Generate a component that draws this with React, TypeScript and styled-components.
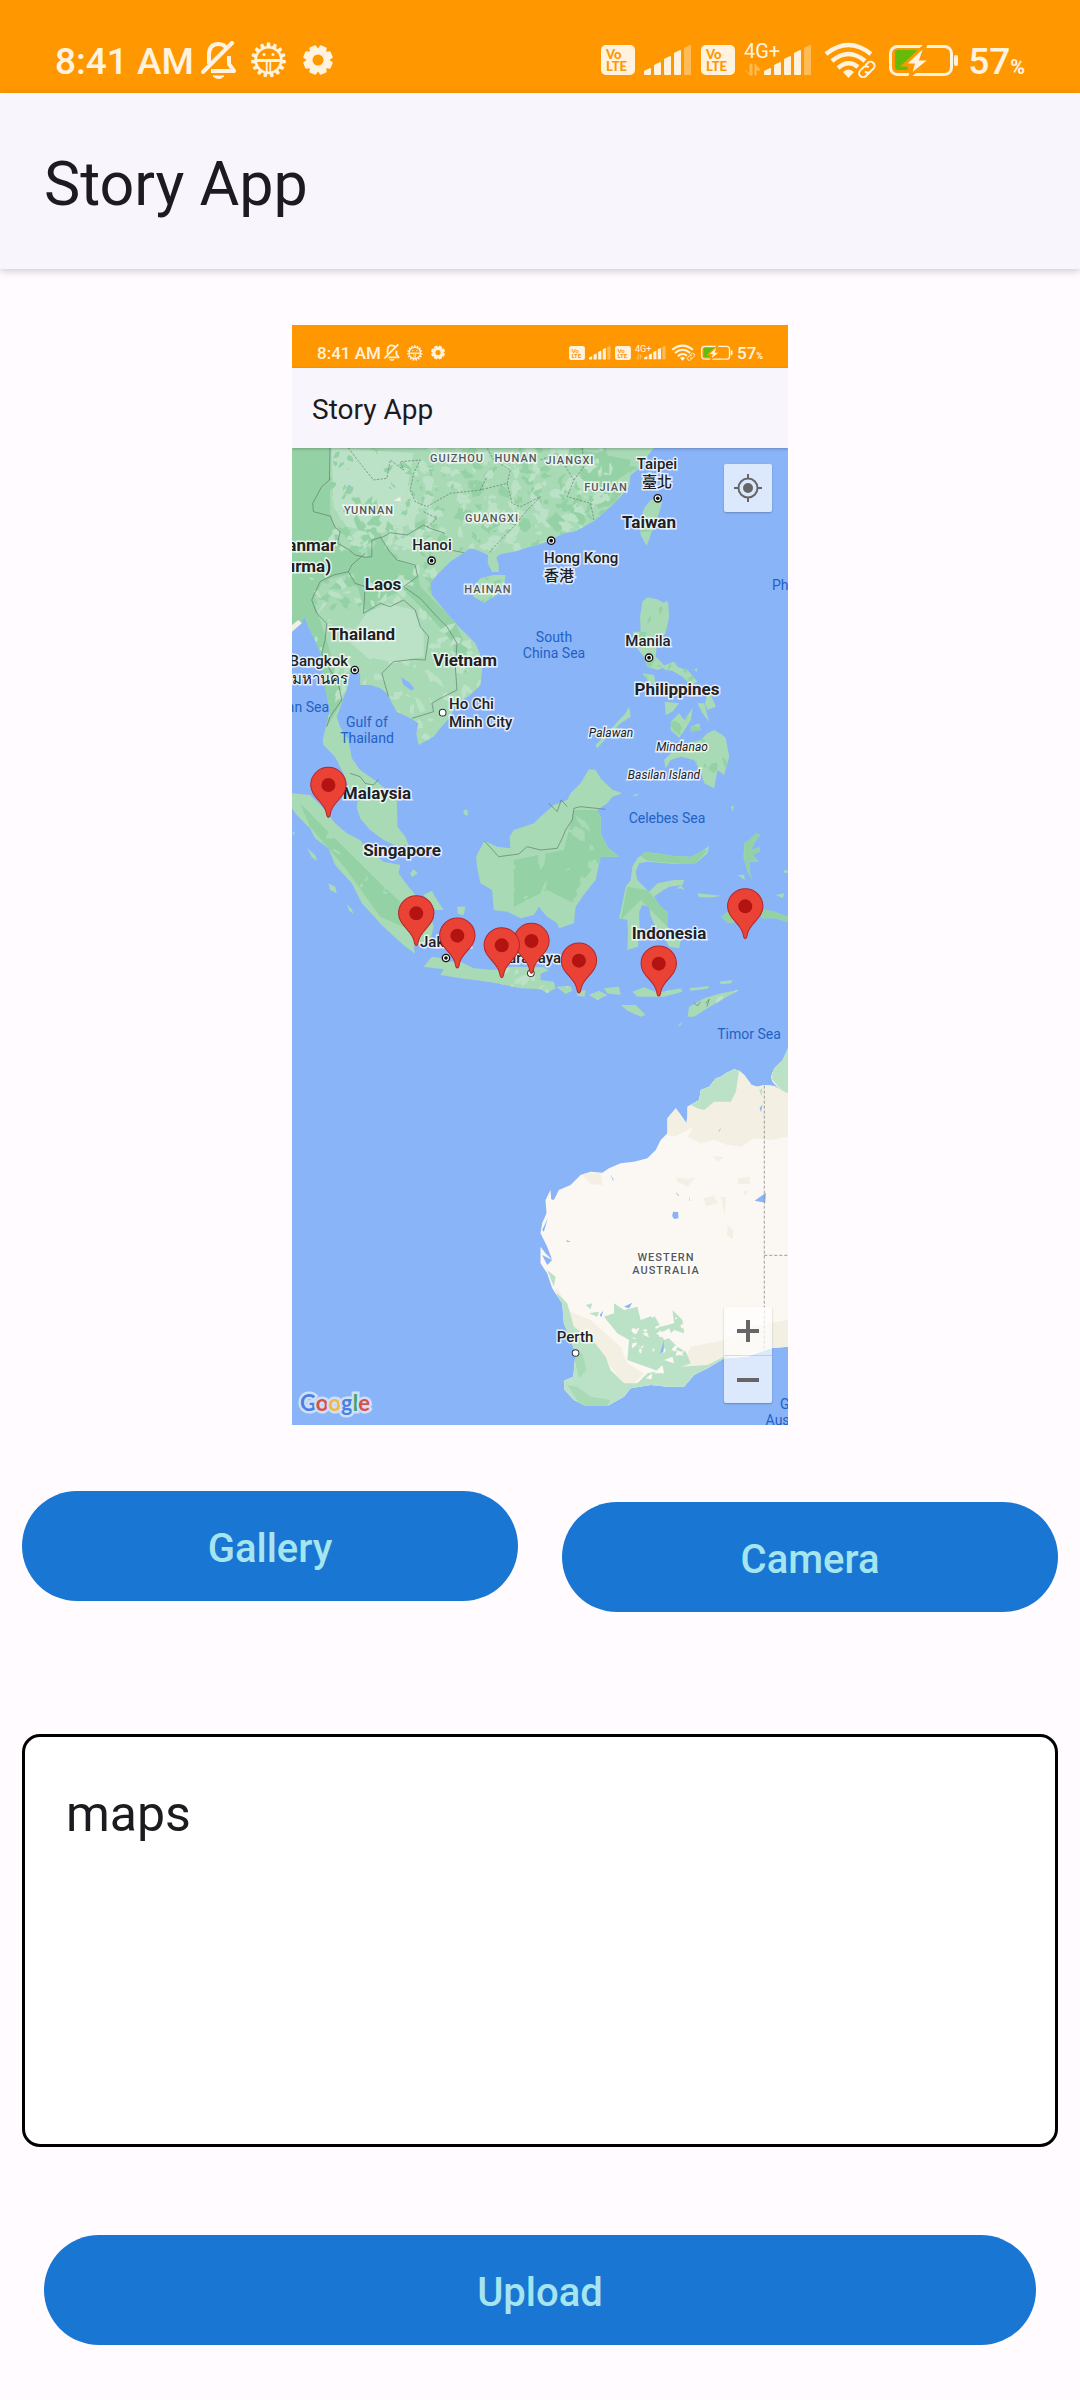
import React from 'react';
import styled, { createGlobalStyle, css } from 'styled-components';

const GlobalStyle = createGlobalStyle`
  * { box-sizing: border-box; }
  body {
    margin: 0;
    background: #fffbff;
    font-family: Roboto, "Noto Sans CJK TC", "Noto Sans", sans-serif;
  }
`;

const CREAM = '#fff3e0';
const ORANGE = '#ff9800';

/* ---------- status bar ---------- */

const Bar = styled.div<{ $compact: boolean }>`
  display: flex;
  align-items: center;
  justify-content: space-between;
  background: ${ORANGE};
  color: ${CREAM};
  height: ${p => (p.$compact ? '43px' : '93px')};
  padding: ${p => (p.$compact ? '12px 25px 0' : '27px 55px 0')};
`;

const Cluster = styled.div<{ $gap: number }>`
  display: flex;
  align-items: center;
  gap: ${p => p.$gap}px;
`;

const Slot = styled.span<{ $compact: boolean }>`
  display: flex;
  justify-content: center;
  width: ${p => (p.$compact ? 23 : 50)}px;
`;

const StatusText = styled.span<{ $compact: boolean }>`
  font-size: ${p => (p.$compact ? 17 : 37)}px;
  line-height: 1;
  font-weight: 500;
  white-space: nowrap;
  padding-top: ${p => (p.$compact ? 1 : 3)}px;
`;

const Percent = styled.small<{ $compact: boolean }>`
  font-size: ${p => (p.$compact ? 9 : 20)}px;
  font-weight: 700;
`;

type IconProps = { w: number; h: number };

function gearPoints(cx: number, cy: number, teeth: number, outer: number, inner: number, duty: number) {
  const pts: string[] = [];
  for (let i = 0; i < teeth; i++) {
    const mid = (i / teeth) * Math.PI * 2 - Math.PI / 2;
    const step = (Math.PI * 2) / teeth;
    [[-duty, inner], [-duty * 0.6, outer], [duty * 0.6, outer], [duty, inner]].forEach(([a, r]) => {
      pts.push(`${(cx + Math.cos(mid + a * step) * r).toFixed(2)},${(cy + Math.sin(mid + a * step) * r).toFixed(2)}`);
    });
  }
  return pts.join(' ');
}

const BellOff = ({ w, h }: IconProps) => (
  <svg width={w} height={h} viewBox="0 0 36 38" fill="none" stroke={CREAM} strokeWidth="4" strokeLinejoin="round">
    <path d="M8 23V14C8 6 12 3 17.500 3S25 6 26 8M28 15v8l5 7H10" />
    <path d="M2 31L31 2" strokeLinecap="round" />
    <path d="M12 35h11q-5 5-11 0z" fill={CREAM} strokeWidth="1" />
  </svg>
);

const BugGear = ({ w, h }: IconProps) => (
  <svg width={w} height={h} viewBox="0 0 36 36">
    <polygon points={gearPoints(17.5, 18, 15, 17.5, 14, 0.35)} fill={CREAM} />
    <circle cx="17.500" cy="18" r="11.500" fill={ORANGE} />
    <path d="M6 18.500h23" stroke={CREAM} strokeWidth="3" />
    <path d="M15.700 19v11M19.300 19v11" stroke={CREAM} strokeWidth="1.800" />
    <circle cx="13" cy="12.500" r="1.500" fill={CREAM} />
    <circle cx="22" cy="12.500" r="1.500" fill={CREAM} />
  </svg>
);

const Gear = ({ w, h }: IconProps) => (
  <svg width={w} height={h} viewBox="0 0 32 32">
    <polygon
      points={gearPoints(15, 16, 8, 13.5, 10.5, 0.36)}
      fill={CREAM}
      stroke={CREAM}
      strokeWidth="3"
      strokeLinejoin="round"
      transform="rotate(22.5 15 16)"
    />
    <circle cx="15" cy="16" r="5.500" fill={ORANGE} />
  </svg>
);

const Volte = ({ w, h }: IconProps) => (
  <svg width={w} height={h} viewBox="0 0 34 30" fontFamily="Lato, sans-serif" fontWeight="900" fill={ORANGE}>
    <rect width="34" height="30" rx="5" fill={CREAM} />
    <text x="5" y="14" fontSize="13">Vo</text>
    <text x="5" y="26" fontSize="13">LTE</text>
  </svg>
);

const bars = (x: number) =>
  [
    [24, 7],
    [18, 13],
    [12, 19],
    [6, 25],
    [1, 30],
  ].map(([y, h], i) => (
    <path
      key={i}
      d={`M${x + i * 10} ${y + 3}l6-3q1 0 1 1v${h - 2}q0 1-1 1h-5q-1 0-1-1z`}
      fill={i === 4 ? '#ffbb55' : CREAM}
    />
  ));

const Signal = ({ w, h }: IconProps) => (
  <svg width={w} height={h} viewBox="0 0 48 32">{bars(0)}</svg>
);

const SignalData = ({ w, h }: IconProps) => (
  <svg width={w} height={h} viewBox="0 0 68 36" overflow="visible">
    <text x="0" y="16" fontSize="20" fill={CREAM}>4G+</text>
    <path d="M1 28l5 5V22h2v11H6zM11 33V22l5 6h-4v5z" fill="#ffbb55" stroke="#ffbb55" />
    <g transform="translate(0 2)">{bars(20)}</g>
  </svg>
);

const Wifi = ({ w, h }: IconProps) => (
  <svg width={w} height={h} viewBox="0 0 59 36" fill="none" stroke={CREAM}>
    <path d="M5 12Q27.500-6 50 12M11 19Q27.500 5 44 19M17 26Q27.500 17 37 25" strokeWidth="4.500" />
    <path d="M22 30q5.500-5 11 0l-5.500 6z" fill={CREAM} stroke="none" />
    <g strokeWidth="2" strokeLinecap="round" transform="rotate(-45 46 28)">
      <path d="M46 31.500h-5a4 4 0 0 1 0-8h4.500a4 4 0 0 1 3.500 3" />
      <path d="M46 23.500h5a4 4 0 0 1 0 8h-2" opacity="0" />
      <path d="M49 23.500h2.500a4 4 0 0 1 0 8H47a4 4 0 0 1-3.500-3" />
    </g>
  </svg>
);

const Battery = ({ w, h }: IconProps) => (
  <svg width={w} height={h} viewBox="0 0 70 32">
    <rect x="1.500" y="2.500" width="61" height="28" rx="7" fill="none" stroke={CREAM} strokeWidth="3" />
    <path d="M6 9q0-3 3-3h20L17 18l2 8H9q-3 0-3-3z" fill="#66bb0a" />
    <path d="M37 0L15 21h9l-3 11 21-17H32z" fill={CREAM} stroke={ORANGE} strokeWidth="3" />
    <rect x="65" y="11" width="4" height="11" rx="2" fill={CREAM} />
  </svg>
);

function StatusBar({ compact = false }: { compact?: boolean }) {
  const s = compact
    ? { bell: [16, 17], bug: [16, 16], gear: [15, 15], volte: [16, 14], sig: [22, 15], data: [31, 17], wifi: [27, 17], bat: [32, 15] }
    : { bell: [36, 38], bug: [36, 36], gear: [32, 32], volte: [34, 30], sig: [48, 32], data: [68, 36], wifi: [59, 36], bat: [70, 32] };
  return (
    <Bar $compact={compact}>
      <Cluster $gap={0}>
        <StatusText $compact={compact}>8:41 AM</StatusText>
        <Slot $compact={compact}><BellOff w={s.bell[0]} h={s.bell[1]} /></Slot>
        <Slot $compact={compact}><BugGear w={s.bug[0]} h={s.bug[1]} /></Slot>
        <Slot $compact={compact}><Gear w={s.gear[0]} h={s.gear[1]} /></Slot>
      </Cluster>
      <Cluster $gap={compact ? 4 : 9}>
        <Volte w={s.volte[0]} h={s.volte[1]} />
        <Signal w={s.sig[0]} h={s.sig[1]} />
        <Volte w={s.volte[0]} h={s.volte[1]} />
        <SignalData w={s.data[0]} h={s.data[1]} />
        <Wifi w={s.wifi[0]} h={s.wifi[1]} />
        <Battery w={s.bat[0]} h={s.bat[1]} />
        <StatusText $compact={compact}>
          57<Percent $compact={compact}>%</Percent>
        </StatusText>
      </Cluster>
    </Bar>
  );
}

/* ---------- app bar ---------- */

const AppBar = styled.header<{ $compact?: boolean }>`
  position: relative;
  z-index: 1;
  display: flex;
  align-items: center;
  background: #f8f5fc;
  color: #1c1b1f;
  font-weight: 400;
  line-height: 1;
  ${p =>
    p.$compact
      ? css`
          height: 80px;
          padding: 4px 20px 0;
          font-size: 28px;
          box-shadow: 0 1px 3px rgba(0, 0, 0, 0.25);
        `
      : css`
          height: 176px;
          padding: 7px 44px 0;
          font-size: 61px;
          box-shadow: 0 2px 8px rgba(0, 0, 0, 0.2);
        `}
`;

const Title = styled.h1`
  margin: 0;
  font: inherit;
`;

/* ---------- map drawing ---------- */
/* Map units: three to a pixel, the visible window starts at 36,24. */

const MAINLAND =
  'M36 24H1120L1090 60 1070 90 1050 105 1045 140 1020 170 995 195 945 240 910 260 880 275 850 280 810 300 780 312 745 322 700 335 660 343 648 352 655 375 655 396 635 396 622 370 623 345 590 330 570 325 540 345 510 365 490 385 470 405 450 430 455 465 475 490 500 520 530 555 560 585 585 610 600 645 605 690 600 735 570 765 530 790 510 830 480 865 460 890 415 915 408 880 415 850 390 835 350 815 335 790 320 760 300 745 270 735 240 735 240 700 205 700 205 735 195 760 185 790 170 830 180 860 205 900 215 955 240 990 290 1025 320 1050 350 1080 352 1160 375 1190 385 1215 350 1218 310 1200 270 1170 240 1135 230 1100 235 1070 205 1040 190 1000 165 950 130 915 128 900 135 870 150 810 130 720 125 650 105 600 85 560 72 528 65 550 36 575Z';

const ISLANDS = [
  'M1130 170L1145 185 1135 220 1115 270 1098 318 1080 285 1077 250 1090 205 1110 180Z',
  'M575 445L600 415 640 405 675 405 672 430 650 465 610 488 580 470Z',
  'M1085 485L1100 472 1130 478 1148 488 1162 482 1165 530 1155 580 1130 600 1125 650 1155 680 1130 690 1100 680 1090 650 1065 620 1070 595 1055 575 1080 575 1078 530Z',
  'M1140 680L1180 665 1192 682 1220 690 1250 725 1230 735 1205 710 1175 692 1155 690Z',
  'M1085 700L1120 705 1125 735 1105 730Z',
  'M1280 765L1290 765 1305 800 1280 810 1272 790Z',
  'M1152 785L1195 790 1175 815 1155 825Z',
  'M1170 845L1195 820 1210 840 1235 805 1230 840 1205 880 1195 893 1170 870Z',
  'M1250 790L1270 790 1285 845 1265 820Z',
  'M1230 860L1255 850 1260 870 1230 875Z',
  'M1240 690L1250 683 1248 695Z',
  'M1300 870L1325 885 1335 895 1345 950 1330 1005 1310 990 1300 1045 1270 1030 1260 995 1240 960 1200 950 1170 960 1155 985 1150 960 1180 930 1220 910 1260 900 1280 880Z',
  'M1045 800L1050 830 1020 850 990 880 950 925 945 915 980 880 1015 840 1035 820Z',
  'M780 1130L760 1150 700 1170 688 1190 690 1225 650 1220 612 1203 600 1225 587 1250 590 1280 600 1330 635 1350 640 1410 680 1415 720 1435 760 1425 775 1400 800 1430 830 1450 835 1465 880 1450 885 1400 905 1370 945 1320 960 1250 1015 1250 980 1220 960 1180 960 1130 950 1110 980 1090 995 1070 1025 1060 995 1050 960 1015 945 990 925 988 900 1030 870 1060 860 1080 820 1095Z',
  'M36 1060L90 1065 130 1105 165 1150 200 1180 240 1200 260 1225 310 1265 360 1275 355 1300 385 1340 410 1370 450 1420 460 1460 450 1500 400 1520 405 1542 370 1515 310 1460 245 1390 215 1330 165 1275 145 1225 105 1195 90 1165 50 1125 36 1105Z',
  'M430 1365L455 1352 470 1380 490 1410 465 1410Z',
  'M530 1400L555 1400 550 1425 533 1422Z',
  'M82 1225L105 1245 112 1262 95 1252Z',
  'M145 1330L165 1340 170 1360 150 1350Z',
  'M200 1393L215 1408 220 1422 208 1412Z',
  'M36 1173L46 1180 40 1184ZM390 1300L400 1288 412 1300 395 1312ZM548 1112L560 1108 564 1126 554 1126Z',
  'M430 1580L455 1550 490 1555 500 1565 540 1565 580 1585 640 1590 700 1580 790 1582 805 1590 780 1602 780 1620 820 1625 825 1645 800 1660 780 1648 720 1645 650 1630 600 1622 540 1615 480 1605 490 1588Z',
  'M828 1640L870 1638 875 1652 855 1662ZM888 1655L915 1650 912 1670 890 1668Z',
  'M925 1665L955 1652 980 1665 950 1680ZM970 1645L1015 1640 1020 1665 980 1660Z',
  'M1055 1655L1090 1642 1130 1658 1200 1645 1205 1655 1150 1670 1070 1670Z',
  'M1020 1695L1065 1695 1095 1725 1080 1730 1040 1712ZM1225 1645L1285 1638 1280 1646 1230 1652Z',
  'M1220 1730L1225 1700 1270 1675 1320 1660 1375 1650 1330 1675 1280 1705 1240 1730ZM1190 1757L1205 1745 1200 1756Z',
  'M1315 1625L1355 1620 1350 1630 1320 1633Z',
  'M1285 1218L1280 1240 1245 1270 1180 1272 1100 1265 1075 1270 1065 1295 1070 1320 1090 1340 1105 1355 1130 1330 1180 1320 1210 1320 1205 1335 1165 1340 1140 1355 1120 1370 1140 1400 1160 1415 1160 1460 1180 1480 1200 1500 1195 1525 1165 1520 1150 1490 1125 1460 1110 1430 1105 1400 1085 1395 1075 1415 1077 1460 1072 1520 1040 1530 1042 1480 1040 1440 1015 1435 1025 1390 1035 1340 1050 1320 1055 1280 1070 1255 1095 1235 1180 1248 1230 1250 1260 1235Z',
  'M1425 1180L1437 1185 1420 1210 1410 1230 1437 1222 1435 1235 1415 1245 1435 1265 1405 1265 1408 1300 1415 1320 1400 1295 1388 1250 1390 1210 1405 1200Z',
  'M1250 1360L1320 1367 1300 1372 1255 1372ZM1320 1430L1345 1412 1400 1425 1380 1445 1340 1448ZM1445 1408L1480 1415 1521 1430 1521 1445 1480 1435 1440 1435Z',
  'M1485 1365L1510 1360 1505 1375ZM1370 1305L1390 1305 1392 1320ZM1508 1290L1521 1292V1298H1510ZM1350 1100L1358 1096 1356 1115ZM1185 1348L1200 1336 1212 1350 1198 1345ZM1055 1066L1075 1060 1068 1068Z',
];

const ASIA = MAINLAND + ISLANDS.join('');

const AUSTRALIA =
  'M1521 1825L1505 1860 1480 1885 1470 1910 1475 1925 1497 1950 1480 1938 1450 1935 1430 1940 1412 1935 1390 1905 1375 1892 1360 1888 1335 1900 1320 1910 1305 1915 1285 1940 1260 1950 1255 1980 1220 2000 1220 2025 1217 2050 1200 2025 1185 2005 1160 2035 1160 2080 1140 2100 1125 2130 1100 2155 1060 2165 1020 2170 985 2185 965 2198 930 2195 900 2205 870 2235 835 2250 820 2280 812 2278 810 2250 795 2280 798 2320 785 2350 780 2380 800 2420 815 2460 795 2440 780 2420 780 2470 800 2500 815 2545 845 2590 850 2650 870 2700 885 2740 878 2810 850 2822 852 2850 880 2880 915 2898 980 2898 1030 2870 1050 2845 1110 2835 1160 2840 1210 2840 1240 2805 1280 2785 1330 2755 1400 2750 1470 2725 1521 2720Z';

const BORDERS = [
  'M150 24L148 120 125 140 98 190 100 215 150 228 165 262 180 275 172 310 205 328 225 345 255 352 275 350 275 300 310 290 330 278 380 285 430 255 450 265 495 280M495 332L520 332 550 338',
  'M255 340L215 375 205 395 160 405 120 425 95 480 110 520 140 550 135 600 125 640 150 690 175 730 185 780 150 830 140 860',
  'M205 395L225 430 255 440 250 520 300 490 330 500 370 480 405 510 420 560 445 590 435 660 400 658 340 665 305 700 325 770',
  'M300 290L325 330 350 360 405 375 412 410 370 440 420 475 470 530 500 560 530 610 525 680 530 750 480 775 455 790 460 815 395 835',
  'M210 1000L240 1010 255 1030 280 1035 295 1018',
  'M612 1203L655 1250 715 1242 740 1220 780 1230 830 1225 845 1195 855 1170 875 1140 880 1105 900 1100 975 1108M805 1090L830 1115 842 1080 860 1100',
  'M1240 1688L1250 1698 1258 1686M1275 1690L1285 1678 1278 1700',
];

const PROVINCES = [
  'M205 24L240 70 280 120 320 115 330 60 370 90 360 65 420 60 400 100 390 150 405 185 440 200 510 160 600 150 680 130 695 190 720 200 780 170',
  'M430 215L470 235 440 262M780 170L740 210 700 260 660 300 625 340M680 130L690 90 640 60 620 24M780 60L830 40 880 120 860 170 930 190 940 240M880 120L910 80 905 24M600 150L620 110',
];

/* Repeatable scatter of irregular, slanted patches, used for the relief shading. */
function patches(seed: number, count: number, x0: number, y0: number, x1: number, y1: number, size: number) {
  let s = seed;
  const rnd = () => {
    s = (s * 16807) % 2147483647;
    return s / 2147483647;
  };
  let d = '';
  for (let i = 0; i < count; i++) {
    const cx = x0 + rnd() * (x1 - x0);
    const cy = y0 + rnd() * (y1 - y0);
    const r = size * (0.3 + rnd());
    const flat = 0.3 + rnd() * 0.5;
    const tilt = rnd() * Math.PI;
    const n = 7 + Math.floor(rnd() * 5);
    for (let k = 0; k < n; k++) {
      const a = (k / n) * Math.PI * 2;
      const q = r * (0.4 + rnd() * 0.9);
      const u = Math.cos(a) * q;
      const v = Math.sin(a) * q * flat;
      const px = cx + u * Math.cos(tilt) - v * Math.sin(tilt);
      const py = cy + u * Math.sin(tilt) + v * Math.cos(tilt);
      d += `${k ? 'L' : 'M'}${Math.round(px)} ${Math.round(py)}`;
    }
    d += 'Z';
  }
  return d;
}

const CAPITALS = [[454, 362], [224, 690], [1131, 175], [812, 302], [1105, 653], [497, 1554]];
const CITIES = [[487, 818], [751, 1600], [885, 2739]];
const PINS = [[145, 1132], [408, 1517], [531, 1584], [753, 1600], [664, 1613], [895, 1659], [1134, 1668], [1393, 1496]];

const MapLayer = styled.svg`
  position: absolute;
  inset: 0;
  width: 100%;
  height: 100%;
  pointer-events: none;
`;

const Terrain = () => (
  <MapLayer viewBox="36 24 1485 2931" preserveAspectRatio="none" aria-hidden="true">
    <defs>
      <clipPath id="asia"><path d={ASIA} /></clipPath>
      <clipPath id="australia"><path d={AUSTRALIA} /></clipPath>
    </defs>
    <path d={ASIA} fill="#a8dab5" />
    <g clipPath="url(#asia)">
      <path d="M36 24H150V220L190 330 260 350 300 290 350 360 410 380 420 440 520 540 560 620 560 700 520 680 520 610 440 520 370 450 300 480 250 500 220 400 130 420 100 480 140 600 190 780 140 860 36 600Z" fill="#94d2a5" />
      <path d="M155 24L400 40 380 150 420 190 400 250 300 280 200 260 160 200Z" fill="#bbe2c6" />
      <path d="M260 520L320 490 400 510 430 580 430 650 330 665 260 650 200 600Z" fill="#bbe2c6" />
      <path d="M900 30L1050 60 1040 100 960 150 900 130Z" fill="#94d2a5" />
      <path d="M700 1260L850 1230 880 1110 960 1110 1015 1250 960 1260 900 1330 880 1390 800 1350 700 1400Z" fill="#94d2a5" />
      <path d="M60 1090L160 1190 300 1330 430 1450 440 1490 300 1430 200 1290 90 1160Z" fill="#94d2a5" />
      <path d="M1040 1340L1100 1350 1160 1420 1160 1460 1080 1380 1020 1440ZM1060 1235L1280 1230 1240 1275 1100 1262Z" fill="#94d2a5" />
      <path d="M1320 1410H1521V1450H1320ZM1390 1180H1440V1320H1390Z" fill="#94d2a5" />
      <path d={patches(77, 260, 36, 24, 1060, 500, 24)} fill="#94d2a5" />
      <path d={patches(311, 200, 150, 24, 1000, 330, 20)} fill="#bbe2c6" />
      <path d={patches(53, 110, 60, 360, 600, 900, 20)} fill="#bbe2c6" />
      <path d={patches(919, 110, 1040, 160, 1360, 1050, 18)} fill="#94d2a5" />
      <path d={patches(401, 110, 36, 950, 520, 1540, 18)} fill="#a8dab5" />
      <path d={patches(647, 60, 590, 990, 1010, 1460, 26)} fill="#a8dab5" />
      <path d={patches(128, 60, 430, 1550, 1380, 1740, 18)} fill="#bbe2c6" />
      <path d="M36 555L55 540 66 550 36 580ZM340 182L360 170 362 184Z" fill="#f3efe3" />
      <path d="M362 712L385 725 402 745 395 752 370 735ZM205 132L213 140 208 142ZM465 1020L470 1030Z" fill="#8ab4f8" />
    </g>
    <path d={AUSTRALIA} fill="#fbf8f3" />
    <g clipPath="url(#australia)">
      <path d="M1150 2000L1250 1900 1400 1880 1521 1900V2090L1470 2100 1420 2095 1380 2120 1340 2115 1300 2100 1260 2110 1220 2090 1240 2060 1180 2090 1150 2080Z" fill="#f3efe3" />
      <path d="M900 2200L960 2200 965 2235 930 2232ZM1185 2212L1220 2218 1245 2212 1220 2240 1190 2225ZM1268 2275L1300 2268 1310 2290 1275 2298ZM1320 2270L1335 2270 1332 2325ZM1340 2355L1358 2370 1355 2398 1338 2385ZM1370 2215L1405 2210 1408 2232 1372 2232ZM1385 2255L1402 2250 1395 2270ZM1295 2148L1330 2152 1310 2165Z" fill="#f3efe3" />
      <path d="M870 2615L930 2640 1020 2720 1040 2770 1090 2800 1040 2850 950 2720 880 2660 815 2560 830 2545ZM1210 2760L1230 2720 1330 2700 1400 2660 1521 2640V2740L1400 2740 1280 2790 1210 2780Z" fill="#f3efe3" />
      <path d="M1180 2000L1220 1990 1250 2005 1270 2010 1300 1985 1350 1985 1365 1955 1375 1890 1350 1870 1250 1900ZM1521 1810V1960L1500 1950 1475 1920 1465 1890ZM1435 1950L1445 1945 1442 1970Z" fill="#bbe2c6" />
      <path d="M830 2560L860 2590 880 2660 940 2705 975 2750 990 2790 1030 2830 1070 2830 1100 2800 1200 2780 1280 2775 1340 2745V2860L1000 2910 840 2900ZM800 2490L825 2510 820 2540Z" fill="#bbe2c6" />
      <path d="M970 2630L1000 2620 1000 2590 1030 2610 1070 2600 1080 2640 1120 2625 1140 2660 1180 2650 1175 2610 1205 2640 1210 2680 1180 2670 1160 2690 1190 2720 1215 2735 1230 2770 1150 2800 1040 2760 1045 2700 1010 2680ZM915 2595L935 2590 930 2608ZM925 2620L955 2615 950 2630Z" fill="#bbe2c6" />
      <path d={patches(233, 26, 1060, 2610, 1220, 2740, 13)} fill="#fbf8f3" />
      <path d="M1140 2680L1165 2665 1175 2690 1150 2700ZM1120 2800L1145 2775 1150 2800ZM1150 2760L1175 2750 1180 2770ZM1095 2815L1115 2800 1112 2818Z" fill="#fbf8f3" />
      <path d="M880 2745L905 2740 918 2790 895 2815ZM860 2835L890 2840 930 2870 990 2880 980 2898 900 2898Z" fill="#a8dab5" />
      <path d="M1177 2315L1192 2316 1193 2335 1180 2337 1174 2328ZM1421 2282L1455 2258 1453 2288ZM1030 2600L1055 2588 1045 2605ZM957 2625L968 2612 962 2632ZM1436 2005L1445 1993 1440 2016ZM785 2370L802 2335 790 2375ZM785 2445L815 2460 800 2475ZM1185 2255L1196 2268 1190 2266ZM990 2202L1000 2222 996 2220ZM857 2400L870 2405 860 2406ZM1138 2740L1150 2700 1148 2735ZM1225 2268L1228 2282 1226 2282ZM1312 2075L1322 2062 1316 2074Z" fill="#8ab4f8" />
    </g>
    <g fill="none" stroke="#5f7a6b" strokeWidth="2">
      {BORDERS.map(d => <path key={d} d={d} />)}
      {PROVINCES.map(d => <path key={d} d={d} strokeDasharray="7 4" />)}
      <path d="M1450 1937V2725M1450 2446H1521" stroke="#8a8a88" strokeWidth="2.500" strokeDasharray="9 6" />
    </g>
    {CAPITALS.map(([x, y]) => (
      <g key={x}>
        <circle cx={x} cy={y} r="11" fill="#fff" stroke="#111" strokeWidth="4" />
        <circle cx={x} cy={y} r="5.500" fill="#111" />
      </g>
    ))}
    {CITIES.map(([x, y]) => (
      <circle key={x} cx={x} cy={y} r="10" fill="#fff" stroke="#333" strokeWidth="3" />
    ))}
  </MapLayer>
);

const Pins = () => (
  <MapLayer viewBox="36 24 1485 2931" preserveAspectRatio="none" aria-hidden="true">
    {PINS.map(([x, y]) => (
      <g key={x} transform={`translate(${x} ${y})`}>
        <path
          d="M0 0C-5 0-5-9-7-16C-14-46-53-62-53-97A53 53 0 0 1 53-97C53-62 14-46 7-16C5-9 5 0 0 0Z"
          fill="#ea4335"
          stroke="#b3262a"
          strokeWidth="3"
        />
        <circle cx="0" cy="-97" r="21" fill="#b31412" />
      </g>
    ))}
  </MapLayer>
);

type Kind = 'country' | 'city' | 'region' | 'sea' | 'island';
type Anchor = 'left' | 'center' | 'right';

const kinds = {
  country: css`font-size: 17px; line-height: 21px; font-weight: 700; color: #202124;`,
  city: css`font-size: 15px; line-height: 18px; font-weight: 500; color: #202124;`,
  region: css`font-size: 11px; line-height: 13px; font-weight: 500; letter-spacing: 1px; color: #55585c;`,
  sea: css`font-size: 14px; line-height: 16px; font-weight: 400; color: #1f62c4;`,
  island: css`font-size: 12px; line-height: 16px; font-weight: 400; font-style: italic; color: #202124;`,
};

const shift = { left: '0', center: '-50%', right: '-100%' };

const Label = styled.span<{ $x: number; $y: number; $kind: Kind; $anchor: Anchor }>`
  position: absolute;
  left: ${p => Math.round((p.$x - 36) / 3)}px;
  top: ${p => Math.round((p.$y - 24) / 3)}px;
  transform: translate(${p => shift[p.$anchor]}, -50%);
  text-align: ${p => p.$anchor};
  white-space: pre;
  ${p => kinds[p.$kind]}
  ${p =>
    p.$kind !== 'sea' &&
    css`
      -webkit-text-stroke: 3px rgba(255, 255, 255, 0.75);
      paint-order: stroke fill;
    `}
`;

const LABELS: [string, number, number, Kind, Anchor?][] = [
  ['GUIZHOU', 532, 55, 'region'],
  ['HUNAN', 708, 55, 'region'],
  ['JIANGXI', 870, 59, 'region'],
  ['FUJIAN', 977, 140, 'region'],
  ['YUNNAN', 266, 210, 'region'],
  ['GUANGXI', 635, 235, 'region'],
  ['HAINAN', 623, 447, 'region'],
  ['Myanmar\n(Burma)', 60, 349, 'country'],
  ['Hanoi', 455, 314, 'city'],
  ['Laos', 310, 431, 'country'],
  ['Thailand', 247, 583, 'country'],
  ['Vietnam', 555, 660, 'country'],
  ['Bangkok\nกรุงเทพมหานคร', 205, 691, 'city', 'right'],
  ['Andaman Sea', 147, 801, 'sea', 'right'],
  ['Gulf of\nThailand', 261, 870, 'sea'],
  ['Ho Chi\nMinh City', 507, 820, 'city', 'left'],
  ['Taipei\n臺北', 1131, 98, 'city'],
  ['Taiwan', 1108, 247, 'country'],
  ['Hong Kong\n香港', 792, 381, 'city', 'left'],
  ['Philippine Sea', 1475, 434, 'sea', 'left'],
  ['South\nChina Sea', 823, 614, 'sea'],
  ['Manila', 1105, 603, 'city'],
  ['Philippines', 1192, 748, 'country'],
  ['Palawan', 993, 880, 'island'],
  ['Mindanao', 1205, 920, 'island'],
  ['Basilan Island', 1151, 1004, 'island'],
  ['Celebes Sea', 1162, 1135, 'sea'],
  ['Malaysia', 290, 1060, 'country'],
  ['Singapore', 366, 1231, 'country'],
  ['Jakarta', 420, 1505, 'city', 'left'],
  ['Surabaya', 842, 1554, 'city', 'right'],
  ['Indonesia', 1167, 1480, 'country'],
  ['Timor Sea', 1406, 1781, 'sea'],
  ['WESTERN\nAUSTRALIA', 1157, 2471, 'region'],
  ['Perth', 885, 2692, 'city'],
  ['Great\nAustralian\nBight', 1552, 2939, 'sea'],
];

const Preview = styled.section`
  width: 496px;
  max-width: 100%;
  margin: 56px auto 66px;
  overflow: hidden;
`;

const MapView = styled.div`
  position: relative;
  height: 977px;
  overflow: hidden;
  background: #8ab4f8;
`;

const MapControls = styled.div<{ $edge: 'top' | 'bottom' }>`
  position: absolute;
  right: 16px;
  ${p => (p.$edge === 'top' ? 'top: 16px;' : 'bottom: 22px;')}
  display: flex;
  flex-direction: column;
  border-radius: 2px;
  overflow: hidden;
  background: rgba(255, 255, 255, 0.7);
  box-shadow: 0 1px 2px rgba(0, 0, 0, 0.25);
`;

const MapButton = styled.button`
  display: flex;
  align-items: center;
  justify-content: center;
  width: 48px;
  height: 48px;
  padding: 0;
  border: 0;
  background: none;
  color: #666;

  & + & {
    border-top: 1px solid rgba(0, 0, 0, 0.12);
  }
`;

const Logo = styled.span`
  position: absolute;
  left: 8px;
  bottom: 9px;
  font-family: Lato, sans-serif;
  font-size: 22px;
  line-height: 26px;
  font-weight: 700;
  -webkit-text-stroke: 5px #cfdff8;
  paint-order: stroke fill;
`;

const Letter = styled.span<{ $color: string }>`
  color: ${p => p.$color};
`;

const LOGO: [string, string][] = [
  ['G', '#4a80e0'], ['o', '#d94f4a'], ['o', '#eebb3c'], ['g', '#4a80e0'], ['l', '#3fa263'], ['e', '#d94f4a'],
];

function StoryPhoto() {
  return (
    <Preview aria-label="Selected photo">
      <StatusBar compact />
      <AppBar as="div" $compact>Story App</AppBar>
      <MapView>
        <Terrain />
        {LABELS.map(([text, x, y, kind, anchor]) => (
          <Label key={text} $x={x} $y={y} $kind={kind} $anchor={anchor ?? 'center'}>{text}</Label>
        ))}
        <Pins />
        <MapControls $edge="top">
          <MapButton type="button" aria-label="My location">
            <svg width="28" height="28" viewBox="0 0 28 28" fill="none" stroke="currentColor" strokeWidth="2">
              <circle cx="14" cy="14" r="9.500" />
              <circle cx="14" cy="14" r="5" fill="currentColor" stroke="none" />
              <path d="M14 0v5M14 23v5M0 14h5M23 14h5" />
            </svg>
          </MapButton>
        </MapControls>
        <MapControls $edge="bottom">
          <MapButton type="button" aria-label="Zoom in">
            <svg width="22" height="22" viewBox="0 0 22 22" stroke="currentColor" strokeWidth="4">
              <path d="M0 11h22M11 0v22" />
            </svg>
          </MapButton>
          <MapButton type="button" aria-label="Zoom out">
            <svg width="22" height="22" viewBox="0 0 22 22" stroke="currentColor" strokeWidth="4">
              <path d="M0 11h22" />
            </svg>
          </MapButton>
        </MapControls>
        <Logo>
          {LOGO.map(([c, color], i) => <Letter key={i} $color={color}>{c}</Letter>)}
        </Logo>
      </MapView>
    </Preview>
  );
}

/* ---------- form ---------- */

const Form = styled.form`
  display: flex;
  flex-direction: column;
  padding: 0 22px 55px;
`;

const Sources = styled.div`
  display: grid;
  grid-template-columns: 1fr 1fr;
  gap: 44px;
  margin-bottom: 122px;
`;

const PillButton = styled.button<{ $lowered?: boolean; $inset?: boolean }>`
  height: 110px;
  margin: ${p => (p.$lowered ? '11px 0 0' : p.$inset ? '0 22px' : '0')};
  padding: 4px 24px 0;
  border: 0;
  border-radius: 55px;
  background: #1976d2;
  color: #a5e5f0;
  font-family: inherit;
  font-size: 40px;
  font-weight: 500;
`;

const Description = styled.textarea`
  display: block;
  width: 100%;
  height: 413px;
  margin-bottom: 88px;
  padding: 48px 41px;
  border: 3px solid #000;
  border-radius: 18px;
  background: #fff;
  color: #1c1b1f;
  font-family: inherit;
  font-size: 50px;
  line-height: 58px;
  resize: none;
`;

export default function App() {
  return (
    <>
      <GlobalStyle />
      <StatusBar />
      <AppBar><Title>Story App</Title></AppBar>
      <main>
        <StoryPhoto />
        <Form onSubmit={e => e.preventDefault()}>
          <Sources>
            <PillButton type="button">Gallery</PillButton>
            <PillButton type="button" $lowered>Camera</PillButton>
          </Sources>
          <Description aria-label="Description" defaultValue="maps" spellCheck={false} />
          <PillButton type="submit" $inset>Upload</PillButton>
        </Form>
      </main>
    </>
  );
}
